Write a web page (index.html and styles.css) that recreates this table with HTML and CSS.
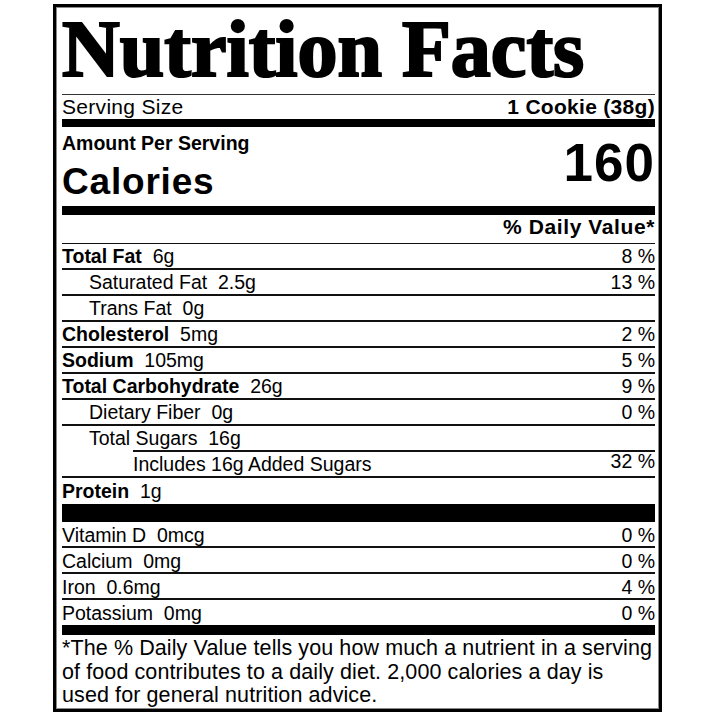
FILE: index.html
```html
<!DOCTYPE html>
<html lang="en">
<head>
<meta charset="utf-8">
<title>Nutrition Facts</title>
<link rel="stylesheet" href="styles.css">
</head>
<body>
<div class="label">
  <h1 class="title">Nutrition Facts</h1>
  <div class="serving">
    <span>Serving Size</span>
    <b>1 Cookie (38g)</b>
  </div>
  <div class="bar bar-8"></div>
  <div class="cal">
    <div class="cal-left">
      <div class="amount">Amount Per Serving</div>
      <div class="calories">Calories</div>
    </div>
    <div class="cal-num">160</div>
  </div>
  <div class="bar bar-9"></div>
  <div class="dv-head">% Daily Value*</div>

  <div class="row"><span><b>Total Fat</b>&nbsp; 6g</span><span>8 %</span></div>
  <div class="row ind1"><span>Saturated Fat&nbsp; 2.5g</span><span>13 %</span></div>
  <div class="row ind1"><span>Trans Fat&nbsp; 0g</span><span></span></div>
  <div class="row"><span><b>Cholesterol</b>&nbsp; 5mg</span><span>2 %</span></div>
  <div class="row"><span><b>Sodium</b>&nbsp; 105mg</span><span>5 %</span></div>
  <div class="row"><span><b>Total Carbohydrate</b>&nbsp; 26g</span><span>9 %</span></div>
  <div class="row ind1"><span>Dietary Fiber&nbsp; 0g</span><span>0 %</span></div>
  <div class="row ind1 sugars"><span>Total Sugars&nbsp; 16g</span><span></span></div>
  <div class="row ind2 added"><span>Includes 16g Added Sugars</span><span>32 %</span></div>
  <div class="row last"><span><b>Protein</b>&nbsp; 1g</span><span></span></div>

  <div class="bar bar-18"></div>

  <div class="vrow"><span>Vitamin D&nbsp; 0mcg</span><span>0 %</span></div>
  <div class="vrow"><span>Calcium&nbsp; 0mg</span><span>0 %</span></div>
  <div class="vrow"><span>Iron&nbsp; 0.6mg</span><span>4 %</span></div>
  <div class="vrow last"><span>Potassium&nbsp; 0mg</span><span>0 %</span></div>

  <div class="bar bar-10"></div>

  <p class="foot">*The % Daily Value tells you how much a nutrient in a serving<br>of food contributes to a daily diet. 2,000 calories a day is<br>used for general nutrition advice.</p>
</div>
</body>
</html>
```

FILE: styles.css
```css
html, body {
  margin: 0;
  padding: 0;
  background: #fff;
}

body {
  font-family: "Liberation Sans", Arial, sans-serif;
  color: #000;
}

.label {
  box-sizing: border-box;
  width: 609px;
  height: 708px;
  margin: 4px 0 0 53px;
  padding: 0 4px 0 6px;
  border: 3px solid #000;
  box-shadow: inset 0 0 0 1px #8a8a8a;
  overflow: hidden;
}

.title {
  margin: 0;
  height: 84px;
  padding-bottom: 3px;
  border-bottom: 1px solid #333;
  font-family: "Liberation Serif", "Times New Roman", serif;
  font-weight: bold;
  font-size: 80px;
  line-height: 84px;
  -webkit-text-stroke: 2.2px #000;
  white-space: nowrap;
}

.serving {
  display: flex;
  justify-content: space-between;
  height: 24px;
  font-size: 21px;
  line-height: 24px;
  letter-spacing: 0.3px;
}

.bar {
  background: #000;
}
.bar-8 { height: 8px; }
.bar-9 { height: 9px; }
.bar-10 { height: 10px; }
.bar-18 { height: 18px; }

.cal {
  display: flex;
  justify-content: space-between;
  height: 79px;
  font-weight: bold;
}

.amount {
  padding-top: 5px;
  font-size: 19.5px;
  line-height: 22px;
}

.calories {
  margin-top: 8px;
  font-size: 37px;
  line-height: 40px;
  letter-spacing: 0.8px;
}

.cal-num {
  padding-top: 10px;
  font-size: 53px;
  line-height: 51px;
  letter-spacing: 1px;
}

.dv-head {
  height: 24px;
  padding-bottom: 4px;
  border-bottom: 1px solid #111;
  text-align: right;
  font-weight: bold;
  font-size: 21px;
  line-height: 24px;
  letter-spacing: 0.6px;
}

.row {
  display: flex;
  justify-content: space-between;
  height: 24px;
  border-bottom: 2px solid #111;
  font-size: 19.5px;
  line-height: 24px;
  white-space: nowrap;
}

.row.last {
  height: 26px;
  line-height: 26px;
  border-bottom: 0;
}

.ind1 { padding-left: 27px; }
.ind2 { padding-left: 71px; }

.row.sugars {
  border-bottom: 0;
  padding-bottom: 2px;
  background: linear-gradient(#111, #111) 71px 100% / calc(100% - 71px) 2px no-repeat;
}

.row.added span:last-child {
  margin-top: -3px;
}

.vrow {
  display: flex;
  justify-content: space-between;
  height: 21px;
  padding-top: 3px;
  border-bottom: 2px solid #111;
  font-size: 19.5px;
  line-height: 21px;
  white-space: nowrap;
}

.vrow.last {
  height: 22px;
  border-bottom: 0;
}

.foot {
  margin: 0;
  padding-top: 2px;
  font-size: 21.5px;
  line-height: 23.5px;
  letter-spacing: 0.1px;
  white-space: nowrap;
}
```
